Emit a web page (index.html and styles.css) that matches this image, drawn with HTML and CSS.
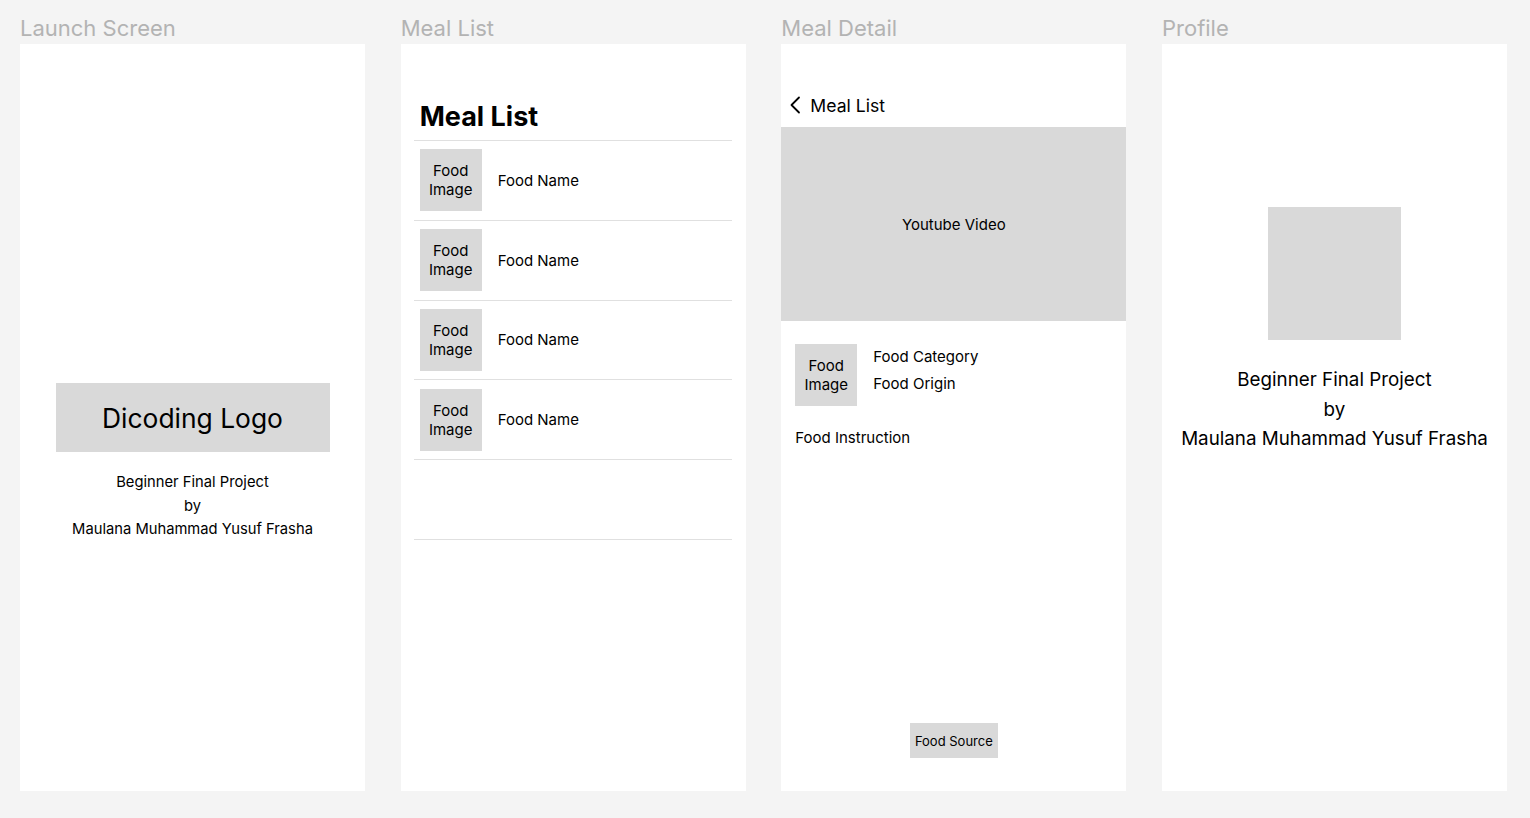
FILE: index.html
```html
<!DOCTYPE html>
<html lang="en">
  <head>
    <meta charset="UTF-8" />
    <meta name="viewport" content="width=device-width, initial-scale=1.0" />
    <title>Meal App Wireframes</title>
    <link rel="stylesheet" href="styles.css">
  </head>
  <body>
    <div class="board">
      <div class="column">
        <div class="frame-label">Launch Screen</div>
        <div class="frame launch">
          <div class="logo-box">Dicoding Logo</div>
          <div class="credit">
            Beginner Final Project<br />
            by<br />
            Maulana Muhammad Yusuf Frasha
          </div>
        </div>
      </div>

      <div class="column">
        <div class="frame-label">Meal List</div>
        <div class="frame list">
          <h1 class="list-title">Meal List</h1>
          <div class="meal-rows">
            <div class="meal-row">
              <div class="thumb">Food<br />Image</div>
              <span class="meal-name">Food Name</span>
            </div>
            <div class="meal-row">
              <div class="thumb">Food<br />Image</div>
              <span class="meal-name">Food Name</span>
            </div>
            <div class="meal-row">
              <div class="thumb">Food<br />Image</div>
              <span class="meal-name">Food Name</span>
            </div>
            <div class="meal-row">
              <div class="thumb">Food<br />Image</div>
              <span class="meal-name">Food Name</span>
            </div>
            <div class="meal-row empty"></div>
          </div>
        </div>
      </div>

      <div class="column">
        <div class="frame-label">Meal Detail</div>
        <div class="frame detail">
          <div class="nav-bar">
            <svg class="back-icon" width="12" height="18" viewBox="0 0 12 18">
              <polyline points="10,1.5 2.5,9 10,16.5" fill="none" stroke="#000" stroke-width="1.8" stroke-linecap="round" stroke-linejoin="round" />
            </svg>
            <span>Meal List</span>
          </div>
          <div class="video">Youtube Video</div>
          <div class="info">
            <div class="thumb">Food<br />Image</div>
            <div class="info-text">
              Food Category<br />
              Food Origin
            </div>
          </div>
          <div class="instruction">Food Instruction</div>
          <div class="source-btn">Food Source</div>
        </div>
      </div>

      <div class="column">
        <div class="frame-label">Profile</div>
        <div class="frame profile">
          <div class="avatar"></div>
          <div class="profile-credit">
            Beginner Final Project<br />
            by<br />
            Maulana Muhammad Yusuf Frasha
          </div>
        </div>
      </div>
    </div>
  </body>
</html>
```

FILE: styles.css
```css
html,
body {
  margin: 0;
  background: #f4f4f4;
  font-family: Inter, "Noto Sans", sans-serif;
  color: #000;
}

.board {
  display: flex;
  gap: 35.67px;
  padding: 15px 20px 0;
}

.column {
  display: flex;
  flex-direction: column;
  width: 345px;
}

.frame-label {
  font-size: 22px;
  line-height: 26px;
  color: #b3b3b3;
  margin-bottom: 3px;
}

.frame {
  height: 747px;
  background: #fff;
  display: flex;
  flex-direction: column;
  box-sizing: border-box;
}

.thumb {
  width: 62px;
  height: 62px;
  flex-shrink: 0;
  background: #d9d9d9;
  display: flex;
  align-items: center;
  justify-content: center;
  text-align: center;
  font-size: 15px;
  line-height: 19px;
}

/* launch */
.launch {
  align-items: center;
  padding-top: 339px;
}

.logo-box {
  width: 274px;
  height: 69px;
  background: #d9d9d9;
  display: flex;
  align-items: center;
  justify-content: center;
  font-size: 26.4px;
}

.credit {
  margin-top: 19px;
  text-align: center;
  font-size: 14.75px;
  line-height: 23.5px;
}

/* list */
.list {
  padding: 57px 14px 0 13px;
}

.list-title {
  margin: 0 0 7px 6px;
  font-size: 27px;
  line-height: 32px;
  font-weight: 700;
}

.meal-row {
  height: 78.8px;
  border-top: 1px solid #e0e0e0;
  display: flex;
  align-items: center;
  padding-left: 6px;
  gap: 16px;
  font-size: 15px;
}

.meal-row.empty {
  border-bottom: 1px solid #e0e0e0;
}

/* detail */
.nav-bar {
  display: flex;
  align-items: center;
  gap: 9px;
  height: 22px;
  padding: 50px 0 0 8px;
  margin-bottom: 11px;
  font-size: 17.6px;
}

.video {
  height: 194px;
  background: #d9d9d9;
  display: flex;
  align-items: center;
  justify-content: center;
  font-size: 15px;
}

.info {
  display: flex;
  gap: 16px;
  margin: 23px 0 0 14px;
}

.info-text {
  font-size: 15px;
  line-height: 27px;
  margin-top: -1px;
}

.instruction {
  margin: 22px 0 0 14px;
  font-size: 15px;
  line-height: 19px;
}

.source-btn {
  margin: auto auto 33px;
  height: 35px;
  padding: 0 5px;
  background: #d9d9d9;
  display: flex;
  align-items: center;
  font-size: 13px;
}

/* profile */
.profile {
  align-items: center;
  padding-top: 163px;
}

.avatar {
  width: 133px;
  height: 133px;
  background: #d9d9d9;
}

.profile-credit {
  margin-top: 25px;
  text-align: center;
  font-size: 18.8px;
  line-height: 29.5px;
}
```
